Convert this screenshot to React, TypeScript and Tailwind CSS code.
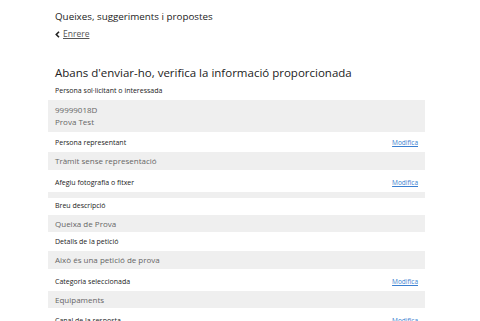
const font = { fontFamily: '"Open Sans", "Noto Sans", sans-serif' }

function Label({ text, edit, h }: { text: string; edit?: boolean; h: string }) {
  return (
    <div className={`flex items-end justify-between px-[7px] pb-[5px] ${h}`}>
      <span className="text-[7px] leading-[8px] text-[#222]">{text}</span>
      {edit && <a className="text-[6.5px] leading-[8px] text-[#3b7fd0] underline">Modifica</a>}
    </div>
  )
}

function Box({ children, h }: { children?: React.ReactNode; h: string }) {
  return <div className={`bg-[#efefef] px-[7px] flex flex-col justify-center text-[8px] leading-[12px] text-[#666] ${h}`}>{children}</div>
}

export default function App() {
  return (
    <div style={font} className="w-[480px] h-[321px] overflow-hidden bg-white">
      <div className="ml-[48px] w-[377px]">
        <div className="px-[7px] pt-[9px]">
          <div className="text-[9.8px] leading-[16px] text-[#222]">Queixes, suggeriments i propostes</div>
          <div className="mt-[4px] h-[10px] flex items-center gap-[3px] text-[8.5px] text-[#555]">
            <svg width="5" height="7" viewBox="0 0 5 7" className="shrink-0">
              <path d="M4 0.8 L1.3 3.5 L4 6.2" fill="none" stroke="#222" strokeWidth="1.6" />
            </svg>
            <a className="underline leading-[10px]">Enrere</a>
          </div>
          <div className="mt-[25px] text-[11.5px] leading-[18px] text-[#222]">Abans d'enviar-ho, verifica la informació proporcionada</div>
        </div>
        <Label text="Persona sol·licitant o interessada" h="h-[18px]" />
        <Box h="h-[32px]">
          <div>99999018D</div>
          <div>Prova Test</div>
        </Box>
        <Label text="Persona representant" edit h="h-[20px]" />
        <Box h="h-[18px]">Tràmit sense representació</Box>
        <Label text="Afegiu fotografia o fitxer" edit h="h-[22px]" />
        <Box h="h-[6px]" />
        <Label text="Breu descripció" h="h-[17px]" />
        <Box h="h-[17px]">Queixa de Prova</Box>
        <Label text="Detalls de la petició" h="h-[19px]" />
        <Box h="h-[18px]">Això és una petició de prova</Box>
        <Label text="Categoria seleccionada" edit h="h-[22px]" />
        <Box h="h-[17px]">Equipaments</Box>
        <Label text="Canal de la resposta" edit h="h-[22px]" />
      </div>
    </div>
  )
}
